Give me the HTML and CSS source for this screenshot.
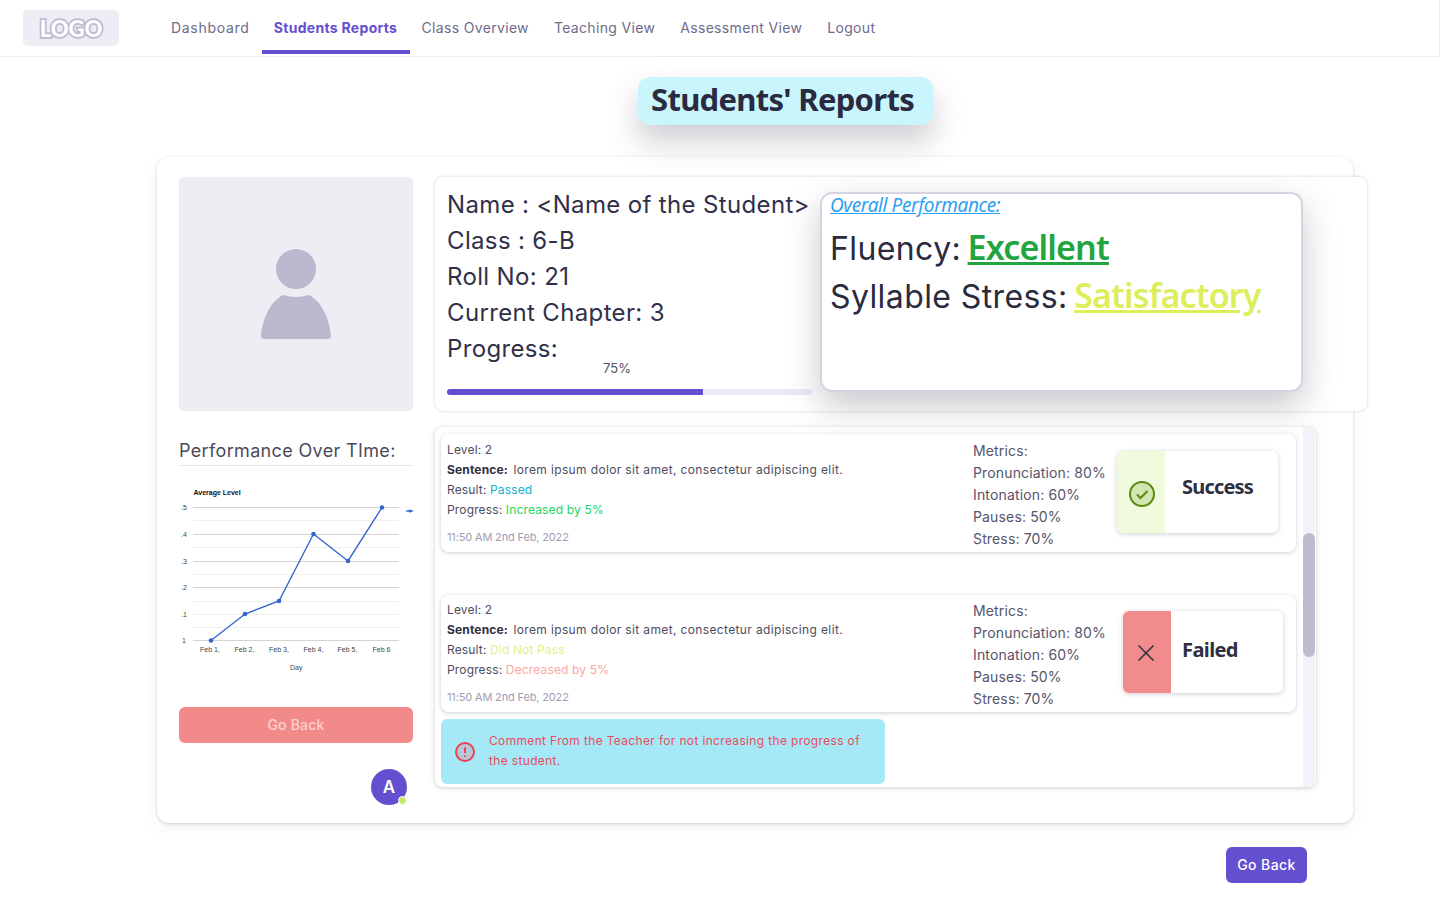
FILE: index.html
```html
<!DOCTYPE html>
<html lang="en">
<head>
<meta charset="utf-8">
<title>Students' Reports</title>
<link rel="stylesheet" href="styles.css">
</head>
<body>
<header class="topbar">
  <div class="logo"><span class="logo-text">LOGO</span></div>
  <nav class="nav">
    <a class="nav-link nav-first">Dashboard</a>
    <a class="nav-link active">Students Reports</a>
    <a class="nav-link">Class Overview</a>
    <a class="nav-link">Teaching View</a>
    <a class="nav-link">Assessment View</a>
    <a class="nav-link">Logout</a>
  </nav>
</header>

<div class="title-row"><h1 class="title">Students' Reports</h1></div>

<main class="card">
  <aside class="left">
    <div class="photo">
      <svg class="person" width="70" height="90" viewBox="0 0 70 90"><circle cx="35" cy="20" r="20"/><path d="M22 46Q35 50 48 46C60 52 68 68 70 86Q70 90 67 90H3Q0 90 0 86C2 68 10 52 22 46Z"/></svg>
    </div>
    <h2 class="perf-title">Performance Over TIme:</h2>
    <svg class="chart" width="234" height="200" viewBox="179 480 234 200">
      <text class="c-head" x="193.500" y="494.500">Average Level</text>
      <g class="grid-light">
        <line x1="193" x2="399" y1="520.500" y2="520.500"/><line x1="193" x2="399" y1="547.500" y2="547.500"/><line x1="193" x2="399" y1="574.500" y2="574.500"/><line x1="193" x2="399" y1="601.500" y2="601.500"/><line x1="193" x2="399" y1="614.500" y2="614.500"/><line x1="193" x2="399" y1="627.500" y2="627.500"/>
      </g>
      <g class="grid-dark">
        <line x1="193" x2="399" y1="507.500" y2="507.500"/><line x1="193" x2="399" y1="534.500" y2="534.500"/><line x1="193" x2="399" y1="561.500" y2="561.500"/><line x1="193" x2="399" y1="587.500" y2="587.500"/><line x1="193" x2="399" y1="640.500" y2="640.500"/>
      </g>
      <g class="c-label">
        <text x="181" y="510">.5</text><text x="181" y="537">.4</text><text x="181" y="564">.3</text><text x="181" y="590">.2</text><text x="181" y="617">.1</text><text x="182" y="643">1</text>
        <text x="200" y="652">Feb 1,</text><text x="234.500" y="652">Feb 2,</text><text x="269" y="652">Feb 3,</text><text x="303.500" y="652">Feb 4,</text><text x="337.500" y="652">Feb 5,</text><text x="372.500" y="652">Feb 6</text>
        <text x="290" y="670">Day</text>
      </g>
      <polyline class="c-line" points="211,640.500 245,614 279,601 313.500,534 348,561 382,507.500"/>
      <g class="c-dot">
        <circle cx="211" cy="640.500" r="2.300"/><circle cx="245" cy="614" r="2.300"/><circle cx="279" cy="601" r="2.300"/><circle cx="313.500" cy="534" r="2.300"/><circle cx="348" cy="561" r="2.300"/><circle cx="382" cy="507.500" r="2.300"/>
      </g>
      <line class="c-line" x1="406" x2="413" y1="511" y2="511"/>
      <circle class="c-dot" cx="410" cy="511" r="1.500"/>
    </svg>
    <button class="btn-soft">Go Back</button>
    <div class="avatar-row"><div class="avatar">A<span class="online"></span></div></div>
  </aside>

  <section class="right">
    <div class="info">
      <div class="student">
        <p class="line">Name : &lt;Name of the Student&gt;</p>
        <p class="line">Class : 6-B</p>
        <p class="line">Roll No: 21</p>
        <p class="line">Current Chapter: 3</p>
        <p class="line">Progress:</p>
        <div class="pct">75%</div>
        <div class="bar"><div class="bar-fill" style="width:70.200%"></div></div>
      </div>
      <div class="overall">
        <a class="overall-title">Overall Performance:</a>
        <p class="grade">Fluency: <span class="good">Excellent</span></p>
        <p class="grade">Syllable Stress: <span class="ok">Satisfactory</span></p>
      </div>
    </div>

    <div class="list">
      <div class="list-body">
        <article class="item">
          <div class="details">
            <p class="row">Level: 2</p>
            <p class="row"><b class="strong">Sentence:</b> <span class="sentence">lorem ipsum dolor sit amet, consectetur adipiscing elit.</span></p>
            <p class="row">Result: <span class="passed">Passed</span></p>
            <p class="row">Progress: <span class="up">Increased by 5%</span></p>
            <p class="stamp">11:50 AM 2nd Feb, 2022</p>
          </div>
          <div class="metrics">
            <p class="metric">Metrics:</p>
            <p class="metric">Pronunciation: 80%</p>
            <p class="metric">Intonation: 60%</p>
            <p class="metric">Pauses: 50%</p>
            <p class="metric">Stress: 70%</p>
          </div>
          <div class="badge">
            <div class="badge-side success">
              <svg width="28" height="28" viewBox="0 0 28 28"><circle class="ok-ring" cx="14" cy="14" r="12"/><path class="ok-tick" d="M9 14.500l3.500 3.500 7-7"/></svg>
            </div>
            <div class="badge-text success-text">Success</div>
          </div>
        </article>

        <article class="item item-failed">
          <div class="details">
            <p class="row">Level: 2</p>
            <p class="row"><b class="strong">Sentence:</b> <span class="sentence">lorem ipsum dolor sit amet, consectetur adipiscing elit.</span></p>
            <p class="row">Result: <span class="notpass">Did Not Pass</span></p>
            <p class="row">Progress: <span class="down">Decreased by 5%</span></p>
            <p class="stamp">11:50 AM 2nd Feb, 2022</p>
          </div>
          <div class="metrics metrics-wide">
            <p class="metric">Metrics:</p>
            <p class="metric">Pronunciation: 80%</p>
            <p class="metric">Intonation: 60%</p>
            <p class="metric">Pauses: 50%</p>
            <p class="metric">Stress: 70%</p>
          </div>
          <div class="badge badge-failed">
            <div class="badge-side failed">
              <svg width="18" height="18" viewBox="0 0 18 18"><path class="x-mark" d="M1.500 1.500l15 15M16.500 1.500l-15 15"/></svg>
            </div>
            <div class="badge-text failed-text">Failed</div>
          </div>
        </article>

        <div class="comment">
          <svg class="alert" width="20" height="20" viewBox="0 0 20 20"><circle class="alert-ring" cx="10" cy="10" r="9"/><path class="alert-mark" d="M10 5.500v5.500M10 13.500v1.500"/></svg>
          <p class="comment-text">Comment From the Teacher for not increasing the progress of the student.</p>
        </div>
      </div>
      <div class="track"><div class="thumb"></div></div>
    </div>
  </section>
</main>

<div class="foot"><button class="btn-primary">Go Back</button></div>
</body>
</html>
```

FILE: styles.css
```css
* { box-sizing: border-box; }
html, body { margin: 0; padding: 0; }
body { background: #fff; color: #2f2e41; font-family: Inter, "Noto Sans", sans-serif; }
p, h1, h2 { margin: 0; font-weight: 400; }

.topbar { display: flex; height: 57px; padding: 10px 0 0 23px; border-bottom: 1px solid #eeeef2; border-right: 1px solid #eeeef2; }
.logo { display: flex; align-items: center; justify-content: center; width: 96px; height: 36px; background: #eeedf3; border-radius: 5px; }
.logo-text { font-family: Lato, sans-serif; font-weight: 900; font-size: 22px; letter-spacing: 0; color: #fff; -webkit-text-stroke: 3.500px #bdbad3; paint-order: stroke fill; }
.nav { display: flex; margin-left: 40px; height: 44px; margin-top: 0; }
.nav-link { display: flex; align-items: center; justify-content: center; height: 44px; padding: 0 12px 6px; font-size: 14px; letter-spacing: 0.33px; color: #6e6b8a; border-bottom: 4px solid transparent; white-space: nowrap; margin-right: 1px; }
.nav-first { letter-spacing: 0.7px; margin-right: 0; }
.nav-link.active { width: 148px; margin-right: 0; color: #634fcf; font-weight: 700; letter-spacing: 0.3px; border-bottom-color: #634fcf; padding-left: 0; padding-right: 0; }

.title-row { padding: 20px 0 0 638px; }
.title { display: inline-block; width: 295px; height: 48px; padding: 0 13px; line-height: 44px; background: #c9f5fd; border-radius: 12px; font-family: "Noto Sans", sans-serif; font-weight: 700; font-size: 31px; letter-spacing: -0.7px; white-space: nowrap; color: #2a2a40; box-shadow: 0 16px 30px rgba(60, 60, 80, 0.25); }

.card { display: grid; grid-template-columns: 234px 932px; column-gap: 22px; align-items: start; width: 1196px; height: 666px; margin: 32px 0 0 157px; padding: 20px 0 0 22px; background: #fff; border-radius: 12px; box-shadow: 0 1px 3px rgba(60, 60, 80, 0.22), 0 6px 16px rgba(60, 60, 80, 0.06); }

.photo { display: flex; align-items: center; justify-content: center; width: 234px; height: 234px; background: #eeedf3; border-radius: 5px; }
.person { fill: #bbb9d0; }
.perf-title { height: 33px; margin-top: 22px; padding-top: 1px; font-size: 18px; line-height: 33px; letter-spacing: 0.35px; color: #4b4a5c; border-bottom: 1px solid #e8e8e0; white-space: nowrap; }
.chart { display: block; margin-top: 14px; }
.c-head { font: 700 7px "Liberation Sans", sans-serif; fill: #111; }
.c-label { font: 400 7px "Liberation Sans", sans-serif; fill: #444; }
.grid-light line { stroke: #efefef; stroke-width: 1; }
.grid-dark line { stroke: #d4d4d4; stroke-width: 1; }
.c-line { fill: none; stroke: #3366cc; stroke-width: 1.400; }
.c-dot { fill: #3366cc; }
.btn-soft { display: block; width: 234px; height: 36px; margin-top: 27px; padding: 0 0 2px; background: #f28a8a; color: #fcd0d0; border: 0; border-radius: 6px; font: 500 14px Inter, sans-serif; letter-spacing: 0.2px; }
.avatar-row { display: flex; justify-content: flex-end; padding: 26px 6px 0 0; }
.avatar { position: relative; display: flex; align-items: center; justify-content: center; width: 36px; height: 36px; border-radius: 50%; background: #634fcf; color: #fff; font-weight: 600; font-size: 17px; }
.online { position: absolute; right: 0; bottom: 0; width: 9px; height: 9px; border-radius: 50%; background: #c5ea68; border: 1.500px solid #fff; }

.info { display: flex; width: 932px; height: 234px; padding: 9px 0 0 12px; background: #fff; border-radius: 8px; box-shadow: 0 0 3px rgba(60, 60, 80, 0.25); }
.student { width: 364px; flex: none; padding-top: 1px; }
.line { height: 36px; font-size: 24px; line-height: 36px; letter-spacing: 0.35px; color: #30304a; white-space: nowrap; }
.pct { height: 28px; margin-top: -5px; padding: 0 0 0 156px; font-size: 13px; line-height: 12px; color: #55545f; }
.bar { width: 365px; height: 6px; margin-top: -1px; background: #ece9fa; border-radius: 3px; overflow: hidden; }
.bar-fill { height: 100%; background: #634fcf; }
.overall { flex: none; width: 483px; height: 200px; margin: 6px 0 0 9px; padding: 0 7px 0 8px; background: #fff; border: 2px solid #d5d4e2; border-radius: 12px; box-shadow: 0 14px 34px rgba(60, 60, 80, 0.28); }
.overall-title { display: block; height: 29px; font-family: "Noto Sans", sans-serif; font-style: italic; font-size: 19px; line-height: 22px; letter-spacing: -0.4px; color: #2e9ff5; text-decoration: underline; white-space: nowrap; }
.grade { height: 48px; font-size: 32px; line-height: 48px; letter-spacing: 0.4px; color: #2b2b40; white-space: nowrap; }
.good, .ok { margin-left: -3px; font-family: "Noto Sans", sans-serif; font-weight: 600; font-size: 34px; letter-spacing: -0.85px; text-decoration: underline; }
.good { color: #22a540; }
.ok { color: #dcee5a; }

.list { display: flex; width: 881px; height: 360px; margin-top: 16px; background: #fff; border-radius: 8px; box-shadow: 0 1px 5px rgba(60, 60, 80, 0.25); overflow: hidden; }
.list-body { width: 868px; flex: none; padding: 7px 0 0 6px; }
.track { width: 12px; flex: none; background: #f3f2f8; }
.thumb { width: 12px; height: 124px; margin-top: 106px; background: #bdbbcd; border-radius: 6px; }

.item { display: flex; width: 855px; height: 118px; background: #fff; border-radius: 8px; box-shadow: 0 1px 4px rgba(60, 60, 80, 0.26); }
.item-failed { height: 117px; margin-top: 43px; }
.details { width: 532px; flex: none; padding: 6px 0 0 6px; }
.item-failed .details { padding-top: 5px; }
.row { height: 20px; font-size: 12px; line-height: 20px; letter-spacing: 0.15px; color: #4d4c5e; white-space: nowrap; }
.strong { font-weight: 700; color: #2f2e41; margin-right: 2px; }
.sentence { letter-spacing: 0.36px; }
.passed { color: #14b0cc; }
.up { color: #23d55f; }
.notpass { color: #e2f08c; }
.down { color: #fba6a6; }
.stamp { margin-top: 7px; font-size: 11px; line-height: 20px; letter-spacing: -0.15px; color: #a09eb2; white-space: nowrap; }
.metrics { width: 144px; flex: none; padding-top: 6px; }
.metrics-wide { width: 150px; padding-top: 5px; }
.metric { height: 22px; font-size: 14px; line-height: 22px; letter-spacing: 0.15px; color: #55546a; white-space: nowrap; }
.badge { display: flex; width: 161px; height: 82px; margin-top: 17px; background: #fff; border-radius: 6px; box-shadow: 0 1px 5px rgba(60, 60, 80, 0.24); overflow: hidden; }
.badge-failed { width: 160px; margin-top: 16px; }
.badge-side { display: flex; align-items: center; justify-content: center; width: 48px; flex: none; }
.success { background: #f0fadd; padding: 4px 0 0 2px; }
.failed { background: #f28c8c; padding: 2px 2px 0 0; }
.badge-text { font-family: "Noto Sans", sans-serif; font-weight: 700; font-size: 20px; line-height: 72px; color: #2f2e41; }
.success-text { padding-left: 17px; letter-spacing: -0.8px; }
.failed-text { padding-left: 11px; letter-spacing: -0.6px; line-height: 78px; }
.ok-ring { fill: #d2e5b2; stroke: #5a8a10; stroke-width: 2; }
.ok-tick { fill: none; stroke: #5a8a10; stroke-width: 2; }
.x-mark { fill: none; stroke: #2f2e41; stroke-width: 1.500; }

.comment { display: flex; align-items: center; width: 444px; height: 65px; margin-top: 7px; padding: 0 12px 0 14px; background: #a4e9f5; border-radius: 6px; }
.alert { flex: none; }
.alert-ring { fill: #b5c8d5; stroke: #ee4055; stroke-width: 2; }
.alert-mark { fill: none; stroke: #ee4055; stroke-width: 2; }
.comment-text { margin: -2px 0 0 14px; font-size: 12px; line-height: 20px; letter-spacing: 0.34px; color: #ec4a5e; }

.foot { padding: 24px 0 0 1226px; }
.btn-primary { display: block; width: 81px; height: 36px; background: #634fcf; color: #fff; border: 0; border-radius: 6px; padding: 0 0 2px; font: 500 14px Inter, sans-serif; letter-spacing: 0.4px; }
```
